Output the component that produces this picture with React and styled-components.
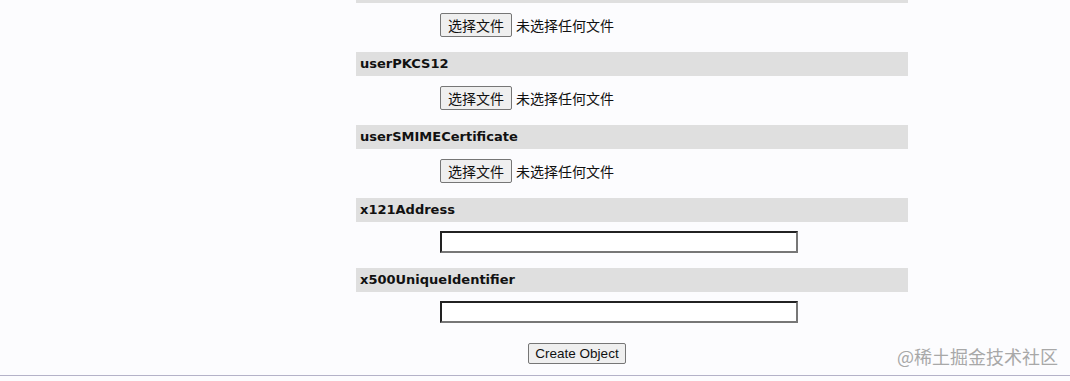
import React from "react";
import styled, { createGlobalStyle } from "styled-components";

const GlobalStyle = createGlobalStyle`
  html, body {
    margin: 0;
    padding: 0;
    background: #fcfcfe;
  }
  body {
    font-family: "Liberation Sans", "Noto Sans CJK SC", sans-serif;
    overflow: hidden;
  }
`;

const fields = [
  { name: "userCertificate", type: "file" },
  { name: "userPKCS12", type: "file" },
  { name: "userSMIMECertificate", type: "file" },
  { name: "x121Address", type: "text" },
  { name: "x500UniqueIdentifier", type: "text" },
];

export default function App() {
  return (
    <>
      <GlobalStyle />
      <Page>
        <Form onSubmit={(e) => e.preventDefault()}>
          {fields.map((f) => (
            <Section key={f.name}>
              <Label>{f.name}</Label>
              {f.type === "file" ? (
                <Field $file>
                  <FileButton type="button">选择文件</FileButton>
                  <FileStatus>未选择任何文件</FileStatus>
                </Field>
              ) : (
                <Field>
                  <TextInput type="text" />
                </Field>
              )}
            </Section>
          ))}
          <SubmitRow>
            <SubmitButton type="submit">Create Object</SubmitButton>
          </SubmitRow>
        </Form>
        <Rule />
        <Watermark>@稀土掘金技术社区</Watermark>
      </Page>
    </>
  );
}

const Page = styled.div`
  position: relative;
  width: 100%;
  height: 381px;
  overflow: hidden;
`;

const Form = styled.form`
  margin: -21px 0 0 356px;
  width: 552px;
`;

const Section = styled.div`
  display: flex;
  flex-direction: column;
`;

const Label = styled.div`
  height: 24px;
  line-height: 24px;
  padding-left: 4px;
  background: #dfdfdf;
  font-family: "DejaVu Sans", Verdana, sans-serif;
  font-weight: bold;
  font-size: 13px;
  color: #111;
`;

const Field = styled.div`
  display: flex;
  align-items: center;
  gap: 4px;
  padding: ${({ $file }) => ($file ? "10px 0 15px 84px" : "9px 0 15px 84px")};
`;

const FileButton = styled.button`
  box-sizing: border-box;
  height: 24px;
  width: 72px;
  padding: 0;
  border: 1px solid #767676;
  border-radius: 2px;
  background: #efefef;
  font-family: "Noto Sans CJK SC", sans-serif;
  font-size: 14px;
  color: #111;
  line-height: 22px;
`;

const FileStatus = styled.span`
  font-family: "Noto Sans CJK SC", sans-serif;
  font-size: 14px;
  color: #111;
`;

const TextInput = styled.input`
  box-sizing: border-box;
  width: 358px;
  height: 22px;
  margin: 0;
  border: 2px solid;
  border-color: #222 #777 #777 #222;
  background: #fff;
  outline: none;
`;

const SubmitRow = styled.div`
  display: flex;
  padding: 5px 0 11px 172px;
`;

const SubmitButton = styled.button`
  box-sizing: border-box;
  height: 21px;
  width: 98px;
  padding: 0;
  border: 1px solid #767676;
  border-radius: 2px;
  background: #efefef;
  font-family: "Liberation Sans", Arial, sans-serif;
  font-size: 13.5px;
  color: #111;
`;

const Rule = styled.div`
  height: 1px;
  background: #b4b2c8;
`;

const Watermark = styled.div`
  position: absolute;
  right: 12px;
  top: 343px;
  font-family: "Noto Sans CJK SC", sans-serif;
  font-size: 18px;
  color: #a8a8a8;
  letter-spacing: 0;
`;
